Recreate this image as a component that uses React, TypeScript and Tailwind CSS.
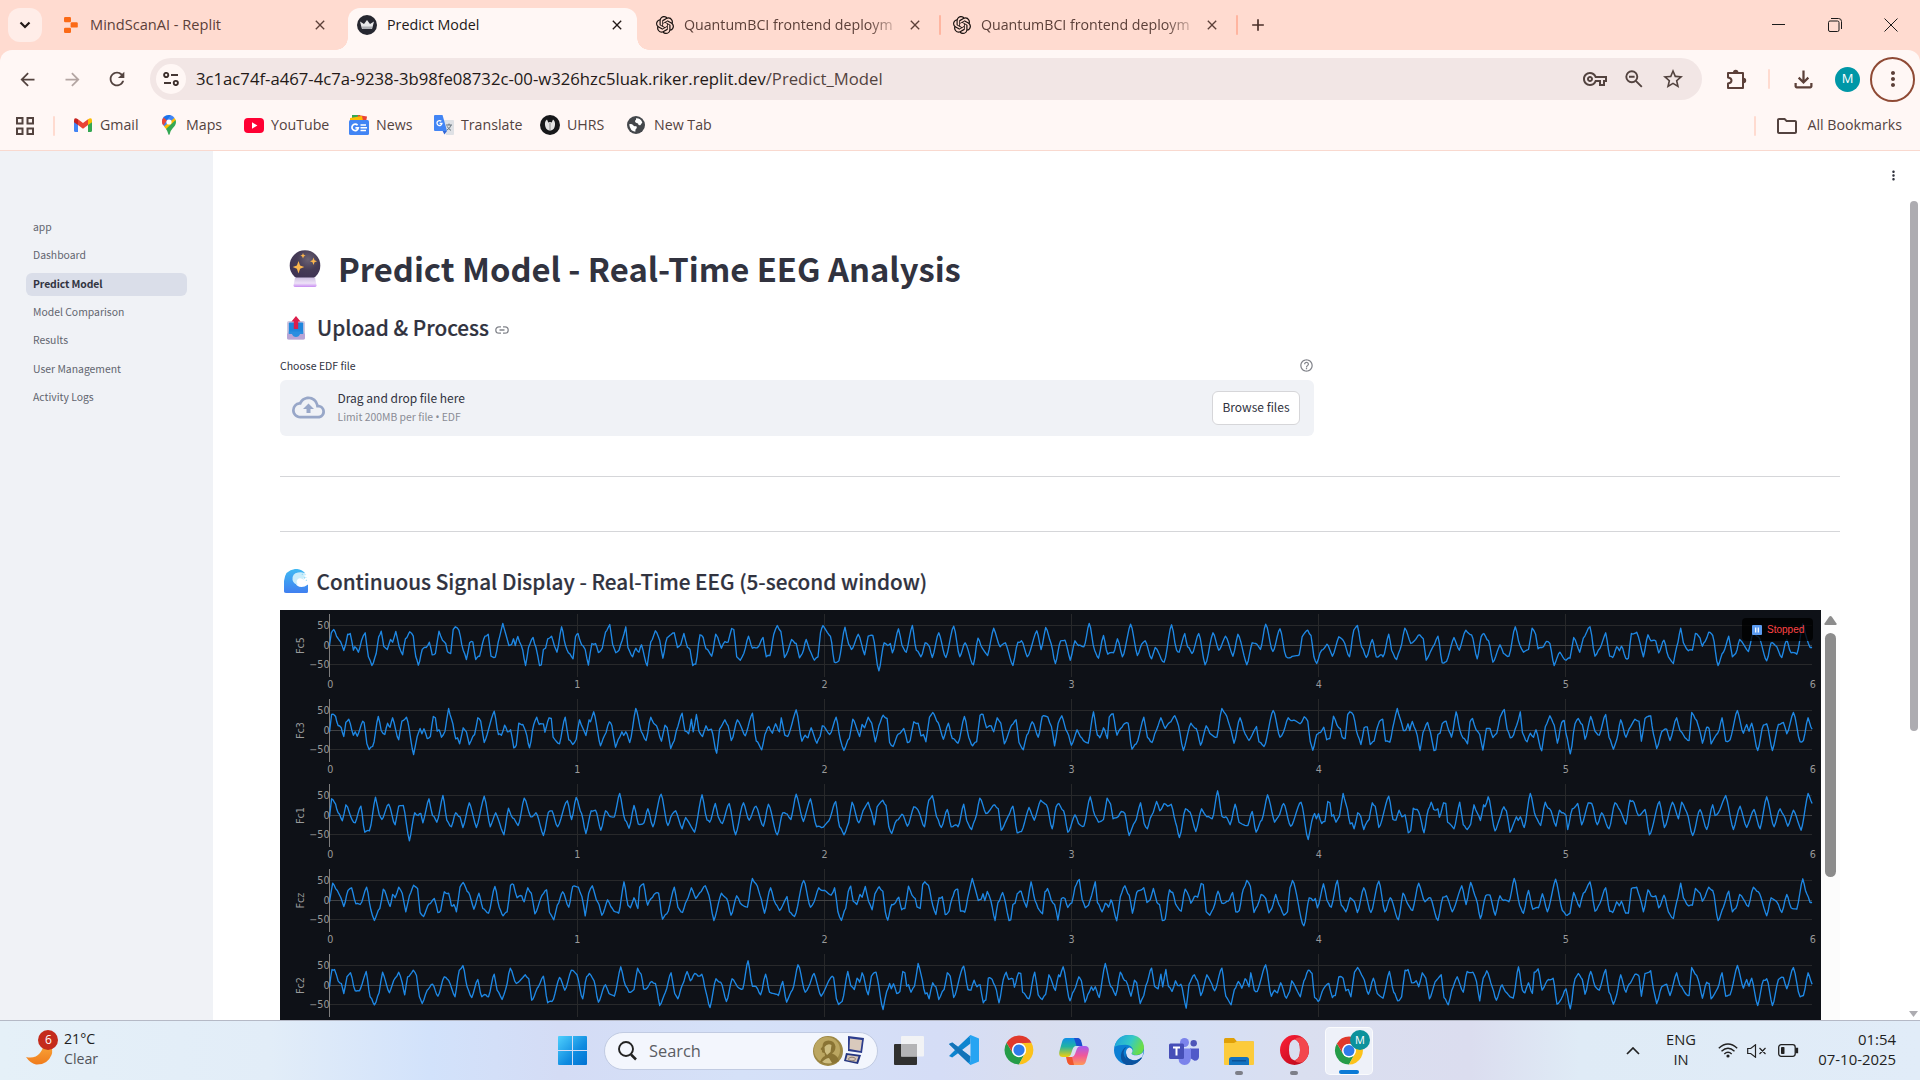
import type { ReactNode } from 'react';
import {
  MdAdd,
  MdArrowBack,
  MdArrowForward,
  MdClose,
  MdHelpOutline,
  MdMoreVert,
  MdOutlineCloudUpload,
  MdOutlineFileDownload,
  MdOutlineFolder,
  MdOutlineVpnKey,
  MdRefresh,
  MdStarBorder,
} from 'react-icons/md';
import { SiOpenai } from 'react-icons/si';

/* ---------- signal data: x / value pairs, 693 x-units per second, 3 value-units per pixel ---------- */

const HEAD: number[][] = [
  [166,0,171,-38,178,-48,190,-21,197,-11,206,15,212,-6,217,-34,224,-36,233,14,237,4,247,20,256,-16,266,-38,275,34,285,60,297,24,304,-26,311,-43,318,2,328,12,337,-18,343,-10,352,-42,361,2,371,28,379,-20,391,-41,401,-28,408,34,415,59,426,12,437,6,446,-10,454,28,463,24,473,-43,483,-16,492,-6,497,19,506,24,513,-48,519,-56,529,-46,541,14,550,42,559,-8,568,-11,576,42,587,32,595,-6,602,-28,611,-34,619,32,631,35,643,-26,652,-66,660,-36,669,0,677,-4,682,-20,687,0,694,-27,704,0,716,60,724,6,737,-24,745,6,755,60,760,58,766,12,772,8,778,-20,789,-28,797,2,804,20,817,-56,828,0,836,22,849,40,856,-26,863,-36,873,-2,883,12,892,59,902,-6,912,-6,920,21,931,8,940,-40,952,-63,960,-4,969,22,978,14,987,-16,997,-56,1003,6,1016,34,1025,8,1034,20,1041,-2,1057,61,1067,-11,1080,-44,1092,-16,1101,38,1113,-24,1120,-30,1133,-38,1142,6,1151,-2,1160,-36,1170,6,1177,12,1185,60,1193,56,1205,-32,1214,-24,1222,10,1238,32,1249,-34,1255,-24,1265,8,1275,-12,1284,-10,1294,-51,1300,-48,1308,34,1318,44,1328,24,1341,-28,1352,8,1361,7,1370,2,1382,-24,1391,34,1401,30,1412,-34,1422,-60,1432,-42,1442,36,1452,16,1462,-18,1475,-6,1484,37,1492,24,1503,-18,1512,12,1526,44,1536,34,1543,-38,1550,-60],
  [166,4,172,-48,183,-42,190,-15,199,-8,206,18,212,-25,220,-34,233,14,238,4,244,17,259,-28,263,-24,271,40,277,57,287,48,303,-42,311,0,321,12,329,-22,336,-10,343,-38,360,28,369,-28,382,-40,402,72,412,18,420,-6,425,10,431,-5,440,24,449,18,457,-42,463,-38,468,2,473,-2,480,20,490,2,500,-66,508,-35,520,25,525,22,531,40,541,-8,550,4,558,42,568,18,573,12,582,-38,590,-28,600,36,628,-58,640,12,648,14,657,-16,665,4,674,-2,683,52,690,44,697,-22,708,-18,716,2,727,52,739,-18,747,-40,754,-18,766,-20,770,5,782,-38,788,-36,793,20,811,40,827,-40,837,28,848,42,858,26,867,-32,877,-6,885,15,894,-32,898,-26,907,-56,926,46,937,16,951,-26,958,-14,968,50,980,20,986,4,991,15,997,4,1008,36,1025,-66,1040,2,1054,30,1067,-40,1075,-22,1083,-14,1097,32,1107,-16,1113,-8,1123,54,1133,30,1139,0,1155,-52,1163,2,1173,10,1181,-34,1186,4,1195,-48,1202,2,1212,18,1222,-14,1228,0,1237,-4,1252,68,1260,-4,1275,-32,1284,-14,1293,30,1310,-32,1320,-12,1332,16,1352,-52,1363,32,1378,58,1387,12,1398,-12,1408,8,1417,-20,1428,4,1433,-38,1443,14,1451,18,1475,-62,1491,32,1500,14,1508,22,1517,-8,1533,38,1542,18,1548,-14],
  [166,4,172,-50,183,-34,190,-8,202,16,212,-32,230,14,238,22,254,-28,265,50,278,46,295,-55,305,-4,313,12,332,-34,350,28,360,-28,373,-30,390,76,405,-8,415,0,422,-6,428,22,445,-50,455,0,467,20,484,-60,495,14,508,34,520,-8,532,4,540,36,558,-38,578,36,600,-58,617,34,632,-8,655,58,668,-22,680,8,695,30,712,-52,730,4,745,-8,766,60,780,-10,790,-14,806,34,833,-44,845,12,858,-54,873,-6,885,54,900,-14,912,-16,927,44,940,-14,950,0,965,4,980,-66,995,14,1006,38,1020,-30,1032,26,1048,22,1059,-20,1073,34,1096,-64,1115,30,1127,-4,1137,-14,1155,40,1165,6,1190,50,1211,-62,1225,14,1232,20,1248,-36,1256,4,1268,24,1287,-36,1305,58,1327,-38,1343,14,1362,-28,1383,32,1397,-34,1422,58,1437,-8,1450,-4,1460,12,1475,-64,1495,18,1515,-50,1532,34,1545,36],
  [166,4,175,-52,188,-30,198,-8,206,18,218,-30,228,-38,240,10,252,12,270,-40,282,28,292,60,307,24,317,-34,336,18,343,-18,350,-8,360,-40,370,-22,380,34,390,-14,402,-46,413,-36,420,36,430,48,445,10,460,-6,470,36,478,30,488,-26,500,-22,508,16,515,12,522,34,532,-40,541,-54,556,-24,571,26,585,-22,596,24,612,38,630,-42,642,20,653,46,664,34,674,-46,682,-48,692,-8,705,-14,712,4,722,-38,732,-22,742,40,762,-16,775,-32,783,36,795,58,805,14,820,-26,837,20,848,-42,864,-40,874,-12,883,46,893,-22,903,-44,918,4,930,44,946,-2,955,18,968,34,977,38,992,-56,1003,14,1010,22,1020,-8,1031,24,1036,-40,1047,-50,1058,14,1068,-6,1076,-18,1089,-22,1100,56,1112,40,1133,-40,1143,20,1156,36,1168,0,1181,-38,1193,-6,1205,-24,1220,-44,1230,-16,1244,60,1265,-22,1280,-6,1292,44,1308,-14,1318,8,1338,20,1352,-66,1362,-50,1377,-4,1386,38,1403,-38,1417,10,1428,30,1449,-12,1456,34,1470,48,1496,-60,1515,20,1525,4,1538,-38,1550,-30],
  [166,4,173,-48,180,-48,190,-14,199,-6,206,24,215,-26,225,-38,238,16,250,16,269,-42,280,34,292,58,305,22,315,-40,334,22,350,-22,360,-40,370,-8,377,28,385,-26,401,-46,410,-30,418,34,426,54,440,14,455,-4,470,32,488,-26,500,-16,518,34,530,-46,540,-60,552,4,565,36,582,-18,593,34,605,28,612,34,628,-34,636,14,650,42,660,12,673,-52,690,-6,700,-14,715,-32,725,-20,733,44,752,4,766,-28,778,52,790,48,811,-24,826,14,844,-46,860,-32,876,40,887,-26,895,-36,908,-14,920,50,940,-2,950,24,965,32,983,-56,996,0,1006,20,1020,12,1030,-52,1040,-34,1047,10,1058,6,1070,-12,1080,-6,1092,60,1108,20,1124,-38,1134,24,1143,40,1155,0,1169,-42,1178,-14,1190,-36,1200,-28,1210,-34,1222,20,1233,66,1250,-20,1263,-10,1279,48,1295,-20,1310,4,1325,10,1340,-74,1352,2,1363,4,1375,28,1389,-34,1400,20,1425,30,1437,-12,1448,50,1464,14,1480,-62,1500,20,1510,4,1525,-36,1545,32],
];

const TAIL: number[][] = [
  [3,44,15,38,26,-24,44,20,55,-22,75,-56,90,32,105,8,122,-38,134,32,143,36,155,4,163,16,169,2,182,38,190,38,199,-36,215,-40,225,-8,235,34,249,-32,258,-14,272,-14,281,22,297,-16,310,34,325,54,335,4,347,-52,355,-8,370,16,382,14,391,-36,405,-22,412,2,420,-12,431,-40,443,-30,459,60,475,20,491,-28,502,34,512,24,524,-18,535,-4,550,18,565,-40,580,-26,605,46,618,-8,635,4,650,36,665,-18,678,22,695,26,713,-65,725,-20,735,6,741,6],
  [3,10,16,70,30,-20,40,-36,52,-18,60,26,77,-42,90,2,103,14,122,-48,132,20,145,56,155,28,167,-32,183,20,192,-4,210,-34,222,-28,229,32,240,-36,257,-44,265,10,275,54,290,4,305,-4,315,30,335,-38,345,0,360,22,372,30,380,-54,395,-30,404,0,412,38,425,-10,432,-6,438,40,458,8,471,-38,482,32,495,28,517,-60,535,8,545,-18,552,2,560,-22,578,60,595,-16,605,-20,622,60,640,-18,655,-24,665,10,685,-54,705,34,715,30,729,-38,741,-4],
  [3,0,8,42,22,-20,38,-36,50,28,70,-38,80,-36,97,28,110,-8,132,40,150,-38,165,-16,183,26,195,-46,203,-44,220,0,240,-18,253,58,283,-42,298,36,322,-40,340,10,350,-40,365,-10,383,60,405,-18,425,42,443,-32,450,0,460,-8,482,-60,505,42,525,-28,545,36,567,-18,585,40,605,-56,627,34,645,-20,655,-2,668,32,685,-16,708,44,729,-66,741,-36],
];

const CHANNELS = ['Fc5', 'Fc3', 'Fc1', 'Fcz', 'Fc2'];
const SECOND = 247.1;
const X0 = 49.5;

function section(src: number[], origin: number, rate: number, from: number, to: number, at: number) {
  const out: [number, number][] = [];
  for (let i = 0; i < src.length; i += 2) {
    const t = (src[i] - origin) / rate;
    if (t >= from && t < to) out.push([t - from + at, src[i + 1] / 3]);
  }
  return out;
}

function tracePoints(row: number): string {
  const n = HEAD.length;
  const pts = [
    ...section(HEAD[row], 166, 693, 0, 2, 0),
    ...section(HEAD[(row + 2) % n], 166, 693, 0.12, 2, 2.02),
    ...section(HEAD[(row + 4) % n], 166, 693, 0.3, 1.38, 3.92),
    ...section(TAIL[row % 3], 0, 741, 0, 1.01, 5),
  ];
  const out: string[] = [];
  for (let i = 0; i < pts.length; i++) {
    const [t, v] = pts[i];
    out.push(`${(X0 + t * SECOND).toFixed(1)},${v.toFixed(1)}`);
    const next = pts[i + 1];
    if (!next) continue;
    const steps = Math.max(1, Math.round((next[0] - t) / 0.006));
    for (let k = 1; k < steps; k++) {
      const u = k / steps;
      const eased = 0.35 * u + 0.65 * u * u * (3 - 2 * u);
      const wobble = Math.sin((i * 7 + k) * 12.9898 + row) * 0.9;
      out.push(`${(X0 + (t + (next[0] - t) * u) * SECOND).toFixed(1)},${(v + (next[1] - v) * eased + wobble).toFixed(1)}`);
    }
  }
  return out.join(' ');
}

function SignalChart() {
  return (
    <svg width="1541" height="410" viewBox="0 0 1541 410" className="block bg-[#0e1117]" fontFamily="'DejaVu Sans', Verdana, sans-serif" fontSize="9.6">
      {CHANNELS.map((name, row) => {
        const zero = 35.5 + row * 85;
        return (
          <g key={name} transform={`translate(0 ${zero})`}>
            {[1, 2, 3, 4, 5].map((s) => (
              <line key={s} x1={Math.round(X0 + s * SECOND) + 0.5} x2={Math.round(X0 + s * SECOND) + 0.5} y1="-31.5" y2="31.5" stroke="#27282a" />
            ))}
            <line x1="50" x2="1532" y1="-20" y2="-20" stroke="#28292b" />
            <line x1="50" x2="1532" y1="0" y2="0" stroke="#414244" />
            <line x1="50" x2="1532" y1="19" y2="19" stroke="#28292b" />
            <line x1="49.5" x2="49.5" y1="-31.5" y2="31.5" stroke="#7c7c7c" />
            <polyline points={tracePoints(row)} fill="none" stroke="#1e88e5" strokeWidth="1.35" strokeLinejoin="round" />
            <g fill="#999a9b">
              <text x="49.5" y="-16.3" textAnchor="end">50</text>
              <text x="49.5" y="3.7" textAnchor="end">0</text>
              <text x="49.5" y="22.7" textAnchor="end">−50</text>
              <text transform="translate(23.5 0) rotate(-90)" textAnchor="middle">{name}</text>
              {row < 4 && [0, 1, 2, 3, 4, 5, 6].map((s) => (
                <text key={s} x={X0 + 0.8 + s * SECOND} y="42.5" textAnchor="middle">{s}</text>
              ))}
            </g>
          </g>
        );
      })}
    </svg>
  );
}

/* ---------- logos ---------- */

const ReplitLogo = () => (
  <svg width="14" height="16" viewBox="0 0 14 16" fill="#fb6a16">
    <rect x="0" y="0" width="7" height="5.2" rx="1.2" />
    <rect x="6.6" y="5.2" width="7.2" height="5.4" rx="1.2" />
    <rect x="0" y="10.7" width="7" height="5.2" rx="1.2" />
  </svg>
);

const CrownLogo = () => (
  <svg width="20" height="20" viewBox="0 0 20 20">
    <circle cx="10" cy="10" r="10" fill="#262730" />
    <path d="M3 6.5l4 2.5L10 5l3 4 4-2.5-2 7.5H5z" fill="#e8e8ea" />
    <path d="M4.8 11.5h10.4L14.7 14H5.3z" fill="#aeb0b5" />
  </svg>
);

const ChromeLogo = () => (
  <svg width="30" height="30" viewBox="0 0 48 48">
    <path d="M24 47A23 23 0 0 1 4.08 12.5L14.5 29.5A11 11 0 0 0 33.5 29.5z" fill="#259c48" />
    <path d="M43.9 12.5A23 23 0 0 1 24 47L33.5 29.5A11 11 0 0 0 24 13z" fill="#fcc21b" />
    <path d="M4.08 12.5A23 23 0 0 1 43.92 12.5L24 13A11 11 0 0 0 14.5 29.5z" fill="#e0392c" />
    <circle cx="24" cy="24" r="11.4" fill="#fff" />
    <circle cx="24" cy="24" r="9" fill="#2f7bea" />
  </svg>
);

const GmailLogo = () => (
  <svg width="18" height="14" viewBox="0 0 18 14">
    <path d="M0 2.5V12.5Q0 14 1.4 14H4V5z" fill="#4285f4" />
    <path d="M18 2.5V12.5Q18 14 16.6 14H14V5z" fill="#34a853" />
    <path d="M14 5V1.2Q18-1 18 2.5V4.2L14 7z" fill="#fbbc04" />
    <path d="M4 5V1.2Q0-1 0 2.5V4.2L4 7z" fill="#c5221f" />
    <path d="M4 1.2L9 5l5-3.8V7L9 10.7 4 7z" fill="#ea4335" />
  </svg>
);

const MapsLogo = () => (
  <svg width="14" height="20" viewBox="0 0 14 20">
    <path d="M7 0Q10.5 0 12.5 3L4 13Q0 9.5 0 7 0 0 7 0z" fill="#4285f4" />
    <path d="M1.6 2.6Q3.8 0 7 0L8.8.3 4 6z" fill="#1a73e8" />
    <path d="M0 7Q0 4.5 1.6 2.6L5 5.4 1.3 10.4Q0 8.8 0 7z" fill="#ea4335" />
    <path d="M12.5 3L2 11.5 4.3 14.2 13.9 6Q13.6 4.2 12.5 3z" fill="#fbbc04" />
    <path d="M14 7Q14 10 10.5 13.5 8.5 15.5 7.7 19 7 21 6.3 19 5.6 16 4 14L13.6 5z" fill="#34a853" />
    <circle cx="7" cy="7" r="2.6" fill="#fff" />
  </svg>
);

const YouTubeLogo = () => (
  <svg width="20" height="15" viewBox="0 0 20 15">
    <rect width="20" height="15" rx="4" fill="#ff0033" />
    <path d="M8 4.2l5.4 3.3L8 10.8z" fill="#fff" />
  </svg>
);

const NewsLogo = () => (
  <svg width="20" height="20" viewBox="0 0 20 20">
    <path d="M3 0h8v6H3z" fill="#34a853" />
    <path d="M9 0l9 1.5L17 7H8z" fill="#ea4335" />
    <path d="M1 3l12-2 1 5H1z" fill="#fbbc04" />
    <rect y="5" width="20" height="15" rx="1.5" fill="#4285f4" />
    <path d="M8.6 10.3A3.2 3.2 0 1 0 9.3 12.9H6.4" fill="none" stroke="#fff" strokeWidth="1.7" />
    <path d="M11.5 10h5.5M11.5 12.7h6.5M11.5 15.4h5.5" stroke="#fff" strokeWidth="1.5" />
  </svg>
);

const TranslateLogo = () => (
  <svg width="20" height="20" viewBox="0 0 20 20">
    <path d="M8 5h11q1 0 1 1v13q0 1-1 1h-7z" fill="#dfe1e5" />
    <path d="M1 0h7.5L13 16H1q-1 0-1-1V1q0-1 1-1z" fill="#4285f4" />
    <path d="M8.6 16H13l-2.6 3.6z" fill="#3367d6" />
    <path d="M7.3 6.3A2.5 2.5 0 1 0 8 8.3H5.6" fill="none" stroke="#fff" strokeWidth="1.3" />
    <path d="M12 10h6M15 8.6V10M17 10q-.8 3.4-4 5M13.2 11.4q1.2 2.6 3.8 4" fill="none" stroke="#6b7780" strokeWidth="1" />
  </svg>
);

const UhrsLogo = () => (
  <svg width="20" height="20" viewBox="0 0 20 20">
    <circle cx="10" cy="10" r="10" fill="#17181a" />
    <path d="M7 4.500Q4.500 6 5 10q.6 4.500 4 5.500h2q3.600-1 4-5.500.4-4-2-5.500l-1.300 3q-1.700-1-3.400 0z" fill="#e4e4e4" />
    <path d="M10 8v7" stroke="#777" strokeWidth=".8" />
  </svg>
);

const GlobeLogo = () => (
  <svg width="18" height="18" viewBox="0 0 18 18">
    <circle cx="9" cy="9" r="9" fill="#44474b" />
    <path d="M2.2 8.2Q5 7.6 6.2 9.3q1.2 1.4 2.8.6 1.4.6.6 2.3-1.5.8-1.3 3.6Q3 15 2.2 8.2z" fill="#fff" />
    <path d="M9 2.3q4.5-.3 6.3 4.2l-2 2.7q-2 .3-2.3-1.8-3.2-.4-3-2.6 1.5-.6 1-2.5z" fill="#fff" />
  </svg>
);

const WindowsLogo = () => (
  <svg width="29" height="29" viewBox="0 0 29 29">
    <defs>
      <linearGradient id="win" x1="0" y1="0" x2="1" y2="1">
        <stop offset="0" stopColor="#4fd0fd" />
        <stop offset=".6" stopColor="#0f8be0" />
        <stop offset="1" stopColor="#0072d2" />
      </linearGradient>
    </defs>
    <path d="M1 0h13v14H0V1q0-1 1-1zM15 0h13q1 0 1 1v13H15zM0 15h14v14H1q-1 0-1-1zM15 15h14v13q0 1-1 1H15z" fill="url(#win)" />
  </svg>
);

const TaskViewLogo = () => (
  <svg width="30" height="29" viewBox="0 0 30 29">
    <rect x="0" y="8" width="23" height="21" rx="1" fill="#30302f" />
    <rect x="7" y="0" width="23" height="20.5" rx="1" fill="#f4f4f4" opacity=".92" />
    <path d="M7 8h16v12.5H7z" fill="#b4b4b6" />
  </svg>
);

const VsCodeLogo = () => (
  <svg width="30" height="30" viewBox="0 0 30 30">
    <path d="M21.5 0L9 11.8 3.2 7.4 0 9l6 6-6 6 3.2 1.6L9 18.2 21.5 30V21.6L13 15l8.5-6.6z" fill="#0d84cf" />
    <path d="M3.2 7.4L0 9l19 18.5 2.5-5.9z" fill="#1473b8" />
    <path d="M21.5 0L30 3.5v23L21.5 30 20 27.6l1.500-1V3.800L20 2.400z" fill="#27a4f2" />
  </svg>
);

const CopilotLogo = () => (
  <svg width="30" height="27" viewBox="0 0 30 27">
    <defs>
      <linearGradient id="cpA" x1="0" y1="0" x2="0" y2="1">
        <stop offset="0" stopColor="#0f8fe8" />
        <stop offset=".45" stopColor="#22b3a2" />
        <stop offset="1" stopColor="#f2cf0b" />
      </linearGradient>
      <linearGradient id="cpB" x1="0" y1="0" x2="0" y2="1">
        <stop offset="0" stopColor="#a45cf0" />
        <stop offset=".5" stopColor="#f0589a" />
        <stop offset="1" stopColor="#ff9a56" />
      </linearGradient>
    </defs>
    <path d="M7 0h11q3 0 4 4l1 4h-6q-2.500 0-3.500 3.500L12 16q-1 3-4 3H4Q-1 19 .5 13L3 4Q4 0 7 0z" fill="url(#cpA)" />
    <path d="M15 0h3.500q3 0 4 4l1 4h-6z" fill="#1a4fd0" />
    <path d="M23 27H12q-3 0-4-4l-.8-4H13q2 0 3-3l1.800-5Q19 8 22 8h4q5 0 3.500 6L27 23q-1 4-4 4z" fill="url(#cpB)" />
    <path d="M15 27h-3q-3 0-4-4l-.8-4H13z" fill="#f0562e" />
  </svg>
);

const EdgeLogo = () => (
  <svg width="30" height="30" viewBox="0 0 30 30">
    <defs>
      <linearGradient id="edA" x1="0" y1="0" x2="1" y2=".35">
        <stop offset="0" stopColor="#1b9de2" />
        <stop offset=".6" stopColor="#35c9c5" />
        <stop offset="1" stopColor="#6bdd4a" />
      </linearGradient>
    </defs>
    <circle cx="15" cy="15" r="15" fill="#0c7fd4" />
    <path d="M.5 12Q3 0 15 0q14 0 15 12.500 0 6.500-7 7.500-4.500.3-5.500-1.500 2-2 1.200-4.800Q17 10 11 9.800 4 9.800.5 12z" fill="url(#edA)" />
    <path d="M12.500 12Q8 16 10.500 21.500 14 28 22 26.500l5.500-3Q21 32 12 29.700 6 27 7 19.500 8.500 13 12.500 12z" fill="#0b539f" />
    <path d="M12 18q-.2-4.500 3.500-5.500 3.500 1 3 4-.8 1.500-1 2 .5 2 5.500 1.700Q28.500 19.500 29.500 16L28.400 22q-4 4-10 3-6-1.500-6.400-7z" fill="#d9e1f5" />
    <path d="M12 18q.4 6 6.500 7.300 5 .8 9-3.300l.2 1.500Q22 29 15 26.500 10.500 24 12 18z" fill="#0b539f" />
  </svg>
);

const TeamsLogo = () => (
  <svg width="30" height="27" viewBox="0 0 30 27">
    <circle cx="24.700" cy="5.200" r="3.200" fill="#4e56b9" />
    <path d="M21 10.500h9v8q0 4-4.500 4.300L21 20z" fill="#5059c9" />
    <circle cx="15.500" cy="4.500" r="4.500" fill="#7b83eb" />
    <path d="M9.500 10.500H22V20q-.5 6.500-6.500 7-5.500-.3-6-6z" fill="#7b83eb" />
    <rect y="5.500" width="15" height="15.500" rx="1.500" fill="#464eb8" />
    <path d="M4 9.500h7M7.500 9.500v8" stroke="#fff" strokeWidth="2" />
  </svg>
);

const ExplorerLogo = () => (
  <svg width="30" height="27" viewBox="0 0 30 27">
    <path d="M0 1.500Q0 0 1.500 0H10l3 3.500H29q1 0 1 1V10H0z" fill="#e0a008" />
    <path d="M0 5h10l3-1.700h16q1 0 1 1V26q0 1-1 1H1q-1 0-1-1z" fill="#fccb3b" />
    <path d="M5 27v-5.500q0-2.500 2.500-2.500h15q2.500 0 2.500 2.500V27z" fill="#1272c0" />
    <path d="M8 22.800h14" stroke="#0a4c8c" strokeWidth="1.200" />
  </svg>
);

const OperaLogo = () => (
  <svg width="29" height="30" viewBox="0 0 29 30">
    <defs>
      <linearGradient id="op" x1="0" y1="0" x2="1" y2="1">
        <stop offset="0" stopColor="#ff2038" />
        <stop offset="1" stopColor="#b30515" />
      </linearGradient>
    </defs>
    <path fillRule="evenodd" d="M14.500 0a14.500 15 0 1 0 0 30a14.500 15 0 1 0 0-30zM14.500 4.500q5.500 1 5.500 10.500t-5.500 10.500Q9 24.500 9 15t5.500-10.500z" fill="url(#op)" />
    <path d="M14.500 4.500Q18 1 23 3q6 4.500 6 12t-6 12q-5 2-8.500-1.500 5.500-1 5.500-10.500t-5.500-10.500z" fill="#f3464c" />
  </svg>
);

const CrystalBall = () => (
  <svg width="32" height="37" viewBox="0 0 32 37">
    <defs>
      <radialGradient id="ball" cx=".6" cy=".3" r=".8">
        <stop offset="0" stopColor="#6b6273" />
        <stop offset=".45" stopColor="#453b55" />
        <stop offset="1" stopColor="#3c2f52" />
      </radialGradient>
      <linearGradient id="base" x1="0" y1="0" x2="0" y2="1">
        <stop offset="0" stopColor="#cdbfe0" />
        <stop offset=".6" stopColor="#eee2f8" />
        <stop offset="1" stopColor="#c88cf2" />
      </linearGradient>
    </defs>
    <circle cx="16" cy="15.500" r="15.300" fill="url(#ball)" />
    <path d="M6 27.500h20l1.500 8q0 1.500-2 1.500h-19q-2 0-2-1.500z" fill="url(#base)" />
    <path d="M9.500 11l1.600 4.600 4.200 1.500-4.200 1.600L9.500 23.500l-1.600-4.800-4.200-1.600 4.200-1.500zM24.500 7.500l1 2.700 2.500 1-2.500 1-1 2.800-1-2.800-2.500-1 2.500-1zM14 3l.8 1.900 1.800.7-1.800.8L14 8.500l-.8-2.100-1.800-.8 1.800-.7z" fill="#fcb64e" />
  </svg>
);

const OutboxEmoji = () => (
  <svg width="19" height="24" viewBox="0 0 19 24">
    <rect x="0" y="5" width="18" height="18.500" rx="2" fill="#cfc6df" />
    <rect x="1.800" y="6.500" width="14.400" height="12" rx="1" fill="#1f86dd" />
    <path d="M0 17.500h5q1 3 4 3t4-3h5V22q0 1.500-1.500 1.500h-15Q0 23.500 0 22z" fill="#b9a5d6" />
    <path d="M1.800 15.500h14.400v2.500H13q-1 3-4 3t-4-3H1.800z" fill="#2a8ee0" />
    <path d="M9 0l4.500 5.500h-2.300V13H6.800V5.500H4.500z" fill="#dc1f4c" />
  </svg>
);

const WaveEmoji = () => (
  <svg width="24" height="24" viewBox="0 0 24 24">
    <defs>
      <linearGradient id="wave" x1="0" y1="0" x2="0" y2="1">
        <stop offset="0" stopColor="#3fb9f3" />
        <stop offset="1" stopColor="#407ff0" />
      </linearGradient>
    </defs>
    <path d="M0 22.500V12Q1 1 11 0q6-.5 10 4l-9 4q-3 5 1 8.500 5 3.500 11-1v7q0 1.500-1.500 1.500h-20Q0 24 0 22.500z" fill="url(#wave)" />
    <path d="M8.500 11Q8 4 14 3.500q6-1 8.500 2.500l-3 .8 4 2.200-4.500-.2L20 11q-4-3-6.500-.5-2 2.500.5 5-4.500-.5-5.500-4.500z" fill="#c9edfb" />
    <path d="M20 8.500l.8.800M22 11l.6.600M18 5l.6.600" stroke="#83d5f5" strokeWidth="1.200" />
  </svg>
);

const CrescentWeather = () => (
  <svg width="34" height="38" viewBox="0 0 34 38">
    <defs>
      <linearGradient id="moon" x1="0" y1="0" x2="0" y2="1">
        <stop offset="0" stopColor="#fbb040" />
        <stop offset="1" stopColor="#f07b1c" />
      </linearGradient>
    </defs>
    <path d="M16 10q13 5 9.500 15Q21.500 35 10 34.500 4 33 0 27q9 2 14-4t2-13z" fill="url(#moon)" />
    <circle cx="22" cy="10" r="10" fill="#c42b1c" />
  </svg>
);

/* ---------- browser chrome ---------- */

const TabSeparator = ({ className }: { className: string }) => <div className={`h-5 w-0.5 rounded-full ${className}`} />;

const PuzzleIcon = ({ className }: { className: string }) => (
  <svg width="21" height="21" viewBox="0 0 21 21" className={className}>
    <path d="M2 4h15v15H2v-4.500q3.500-.5 3.500-3T2 8.500z" fill="none" stroke="currentColor" strokeWidth="2" strokeLinejoin="round" />
    <path d="M7 3.500a2.700 2.700 0 0 1 5.400 0zM17.500 8.800a2.700 2.700 0 0 1 0 5.400z" fill="currentColor" />
  </svg>
);

const ZoomOutIcon = ({ className }: { className: string }) => (
  <svg width="18" height="18" viewBox="0 0 18 18" fill="none" stroke="currentColor" strokeWidth="1.900" className={className}>
    <circle cx="6.800" cy="6.800" r="5.500" />
    <path d="M10.800 10.800l6 6M4 6.800h5.600" />
  </svg>
);

function BrowserTab({ icon, title, className, fade }: { icon: ReactNode; title: string; className: string; fade?: boolean }) {
  return (
    <div className={`flex items-center justify-between text-[#5c4039] ${className}`}>
      <div className="flex items-center">
        {icon}
        <span className={`whitespace-nowrap ${fade ? '[mask-image:linear-gradient(to_right,black_88%,rgba(0,0,0,0.3)_100%)]' : ''}`}>{title}</span>
      </div>
      <MdClose size={16} className="shrink-0" />
    </div>
  );
}

function TabStrip() {
  return (
    <div className="flex h-[50px] shrink-0 items-start bg-[#ffdbd0] text-[14.300px]">
      <div className="ml-2 mt-2 flex h-[34px] w-[34px] items-center justify-center rounded-xl bg-[#ffede8]">
        <svg width="12" height="8" viewBox="0 0 12 8" fill="none" stroke="#231917" strokeWidth="2.200"><path d="M1.500 1.500L6 6l4.500-4.500" /></svg>
      </div>
      <div className="ml-[22px] flex h-[50px]">
        <BrowserTab icon={<ReplitLogo />} title="MindScanAI - Replit" className="w-[264px] gap-3 text-[14.600px] [&>div]:gap-3" />
      </div>
      <div className="ml-2 flex h-[50px] items-end">
        <div className="h-3 w-3 bg-[radial-gradient(circle_at_0_0,#ffdbd0_11.500px,#fff7f5_12px)]" />
      </div>
      <div className="mt-2 flex h-[42px] w-[289px] items-center rounded-t-[12px] bg-[#fff7f5] pb-2 pl-[9px] pr-3 text-[#231917]">
        <span className="flex w-[30px]"><CrownLogo /></span>
        <span className="flex-1 whitespace-nowrap">Predict Model</span>
        <MdClose size={16} />
      </div>
      <div className="flex h-[50px] items-end">
        <div className="h-3 w-3 bg-[radial-gradient(circle_at_100%_0,#ffdbd0_11.500px,#fff7f5_12px)]" />
      </div>
      <div className="ml-[7px] flex h-[50px] items-center">
        <BrowserTab icon={<SiOpenai size={18} color="#1a1210" />} title="QuantumBCI frontend deploym" className="w-[267px] text-[14.200px] [&>div]:gap-[10px]" fade />
        <TabSeparator className="ml-4 bg-[#ffb5a0]" />
        <BrowserTab icon={<SiOpenai size={18} color="#1a1210" />} title="QuantumBCI frontend deploym" className="ml-3 w-[267px] text-[14.200px] [&>div]:gap-[10px]" fade />
        <TabSeparator className="ml-4 bg-[#ffb5a0]" />
        <MdAdd size={20} className="ml-[10px] text-[#4a2f28]" />
      </div>
      <div className="ml-auto mr-[22px] flex h-[50px] items-center gap-[42px]">
        <svg width="14" height="14" viewBox="0 0 14 14" stroke="#1b1b1b"><path d="M0 6.500h13" /></svg>
        <svg width="14" height="14" viewBox="0 0 14 14" fill="none" stroke="#1b1b1b"><rect x=".5" y="3" width="10.500" height="10.500" rx="1.500" /><path d="M3 .5h7.500q3 0 3 3V11" /></svg>
        <svg width="14" height="14" viewBox="0 0 14 14" stroke="#1b1b1b"><path d="M.5.5l13 13M13.500.5l-13 13" /></svg>
      </div>
    </div>
  );
}

function Toolbar() {
  return (
    <div className="bg-[#ffdbd0]">
      <div className="flex h-[58px] items-center rounded-t-[12px] bg-[#fff7f5] pl-[17px] pr-[5px] text-[#53433f]">
        <MdArrowBack size={21} />
        <MdArrowForward size={21} className="ml-6 text-[#b3a5a2]" />
        <MdRefresh size={22} className="ml-[23px]" />
        <div className="ml-[22px] flex h-[42px] w-[1552px] items-center rounded-full bg-[#f2e6e5] pl-1.5 pr-[17px]">
          <div className="flex h-[30px] w-[30px] items-center justify-center rounded-full bg-[#fff7f5]">
            <svg width="16" height="14" viewBox="0 0 16 14" fill="none" stroke="#3b2d2a" strokeWidth="1.900">
              <circle cx="3.200" cy="3" r="2.100" /><path d="M8 3h7" /><circle cx="12.800" cy="11" r="2.100" /><path d="M1 11h7" />
            </svg>
          </div>
          <div className="ml-[10px] whitespace-nowrap text-[16.700px] text-[#231917]">
            3c1ac74f-a467-4c7a-9238-3b98fe08732c-00-w326hzc5luak.riker.replit.dev<span className="text-[#53433f]">/Predict_Model</span>
          </div>
          <div className="ml-auto flex items-center">
            <MdOutlineVpnKey size={24} />
            <ZoomOutIcon className="ml-[18px]" />
            <MdStarBorder size={24} className="ml-[18px]" />
          </div>
        </div>
        <PuzzleIcon className="ml-[24px] text-[#5c4039]" />
        <TabSeparator className="ml-[21px] bg-[#ffdbd0]" />
        <MdOutlineFileDownload size={27} className="ml-[20px] text-[#5c4039]" />
        <div className="ml-auto flex h-[25px] w-[25px] items-center justify-center rounded-full bg-[#0097a7] text-[13px] text-white">M</div>
        <div className="ml-[10px] flex h-[45px] w-[45px] items-center justify-center rounded-full border-2 border-[#8f4a35]">
          <MdMoreVert size={24} className="text-[#5c4039]" />
        </div>
      </div>
    </div>
  );
}

function Bookmark({ icon, label, className }: { icon: ReactNode; label: string; className: string }) {
  return (
    <div className={`flex items-center whitespace-nowrap ${className}`}>
      {icon}
      <span className="-mt-px">{label}</span>
    </div>
  );
}

function BookmarksBar() {
  return (
    <div className="flex h-[43px] shrink-0 items-center border-b border-[#f9d9cf] bg-[#fff7f5] pb-[7px] pl-4 pr-[18px] text-[14.200px] text-[#53433f]">
      <svg width="18" height="18" viewBox="0 0 18 18" fill="none" stroke="#53433f" strokeWidth="2">
        <rect x="1" y="1" width="5.500" height="5.500" /><rect x="11.500" y="1" width="5.500" height="5.500" /><rect x="1" y="11.500" width="5.500" height="5.500" /><rect x="11.500" y="11.500" width="5.500" height="5.500" />
      </svg>
      <TabSeparator className="ml-[19px] bg-[#ffdbd0]" />
      <Bookmark icon={<GmailLogo />} label="Gmail" className="ml-[19px] w-[88px] gap-2" />
      <Bookmark icon={<MapsLogo />} label="Maps" className="w-[82px] gap-[10px]" />
      <Bookmark icon={<YouTubeLogo />} label="YouTube" className="w-[105px] gap-[7px]" />
      <Bookmark icon={<NewsLogo />} label="News" className="w-[85px] gap-[7px]" />
      <Bookmark icon={<TranslateLogo />} label="Translate" className="w-[106px] gap-[7px]" />
      <Bookmark icon={<UhrsLogo />} label="UHRS" className="w-[87px] gap-[7px]" />
      <Bookmark icon={<GlobeLogo />} label="New Tab" className="gap-[9px]" />
      <TabSeparator className="ml-auto bg-[#ffdbd0]" />
      <Bookmark icon={<MdOutlineFolder size={24} />} label="All Bookmarks" className="ml-[19px] gap-2" />
    </div>
  );
}

/* ---------- page ---------- */

const PAGES = ['app', 'Dashboard', 'Predict Model', 'Model Comparison', 'Results', 'User Management', 'Activity Logs'];

function Sidebar() {
  return (
    <nav className="flex w-[213px] shrink-0 flex-col gap-[5.400px] bg-[#f0f2f6] pl-[26px] pt-[65px] text-[10.400px] text-[#62656f]">
      {PAGES.map((page) => (
        <a
          key={page}
          className={`flex h-[23px] w-[161px] shrink-0 items-center rounded-md pl-[7px] ${page === 'Predict Model' ? 'bg-[#dadee9] font-bold tracking-[-0.1px] text-[#31333f]' : 'pb-[2px]'}`}
        >
          {page}
        </a>
      ))}
    </nav>
  );
}

function Uploader() {
  return (
    <section className="w-[1034px]">
      <div className="mt-[12px] flex h-5 items-center justify-between text-[10.500px]">
        <span>Choose EDF file</span>
        <MdHelpOutline size={15} className="text-[#83858c]" />
      </div>
      <div className="mt-[4px] flex h-14 items-center rounded-[6px] bg-[#f0f2f6] pl-3 pr-[14px]">
        <MdOutlineCloudUpload size={33} className="text-[#98a7c8]" />
        <div className="ml-[12.500px] flex flex-col pb-px">
          <span className="text-[12px] leading-[19px]">Drag and drop file here</span>
          <span className="text-[10.400px] leading-[19px] text-[#8a8c95]">
            Limit 200MB per file <span className="font-['Noto_Sans']">•</span> EDF
          </span>
        </div>
        <button className="ml-auto h-[34px] w-[88px] rounded-[6px] border border-[#d6d6d9] bg-white pb-px text-[12px]">Browse files</button>
      </div>
    </section>
  );
}

function SignalPanel() {
  return (
    <div className="mt-[13px] flex h-[410px] bg-[#fcfcfc]">
      <div className="relative">
        <SignalChart />
        <div className="absolute right-2 top-2 flex h-[23px] w-[71px] items-center rounded bg-black/80 pl-[10px] font-['Liberation_Sans',sans-serif] text-[10px] text-[#ff4444]">
          <svg width="10" height="10" viewBox="0 0 10 10"><rect width="10" height="10" rx="1" fill="#5a9bf0" /><path d="M3.700 2.500v5M6.300 2.500v5" stroke="#fff" strokeWidth="1.200" /></svg>
          <span className="ml-[5px]">Stopped</span>
        </div>
      </div>
      <div className="flex w-[19px] flex-col items-center pr-[1px] pt-[6px]">
        <svg width="13" height="9" viewBox="0 0 13 9"><path d="M6.500 0Q7.300 0 8 1l4.500 6.500q.5 1.500-.8 1.500H1.300Q0 9 .5 7.500L5 1q.7-1 1.500-1z" fill="#8b8b8b" /></svg>
        <div className="mt-[8px] h-[244px] w-[11px] rounded-full bg-[#8b8b8b]" />
      </div>
    </div>
  );
}

function Page() {
  return (
    <div className="flex h-[869px] shrink-0 overflow-hidden bg-white font-['Noto_Sans_CJK_SC',sans-serif] text-[#31333f]">
      <Sidebar />
      <main className="flex min-w-0 flex-1 pl-[67px]">
        <div className="flex w-[1560px] shrink-0 flex-col">
          <h1 className="mt-[93px] flex h-12 items-center text-[32.780px] font-bold">
            <span className="ml-[9px] mr-[17px] flex"><CrystalBall /></span>
            Predict Model - Real-Time EEG Analysis
          </h1>
          <h3 className="mt-[20px] flex h-[34px] items-center text-[20.730px] font-medium [-webkit-text-stroke:0.2px_#31333f]">
            <span className="ml-[7px] mr-[11px] flex"><OutboxEmoji /></span>
            Upload &amp; Process
            <svg width="14" height="8" viewBox="0 0 14 8" fill="none" stroke="#83858c" strokeWidth="1.300" className="ml-[6px] mt-[4px]">
              <path d="M6 .8H4a3.200 3.200 0 0 0 0 6.400h2M8 .8h2a3.200 3.200 0 0 1 0 6.400H8M4.500 4h5" />
            </svg>
          </h3>
          <Uploader />
          <hr className="mt-10 border-[#d5d6d9]" />
          <hr className="mt-[54px] border-[#d5d6d9]" />
          <h3 className="mt-[34px] flex h-[34px] items-center text-[20.730px] font-medium [-webkit-text-stroke:0.2px_#31333f]">
            <span className="ml-1 mr-[8.500px] flex"><WaveEmoji /></span>
            Continuous Signal Display - Real-Time EEG (5-second window)
          </h3>
          <SignalPanel />
        </div>
        <div className="ml-auto flex w-[80px] shrink-0 flex-col items-end">
          <MdMoreVert size={15} className="mr-[19px] mt-[17px]" />
          <div className="mr-[2px] mt-[18px] h-[530px] w-[8px] rounded-full bg-[#adacb1]" />
          <svg width="9" height="6" viewBox="0 0 9 6" className="mb-[3px] mr-[2px] mt-auto"><path d="M0 0h9L4.500 6z" fill="#adacb1" /></svg>
        </div>
      </main>
    </div>
  );
}

/* ---------- taskbar ---------- */

function AppSlot({ children, running }: { children: ReactNode; running?: boolean }) {
  return (
    <div className="flex h-12 w-12 flex-col items-center justify-end">
      <div className="flex flex-1 items-end justify-center pb-1.5">{children}</div>
      <div className={`h-1 w-2 rounded-full ${running ? 'bg-[#7d7f88]' : ''}`} />
    </div>
  );
}

function Taskbar() {
  return (
    <footer className="flex flex-1 items-center border-t border-[#b5b9c6] bg-[linear-gradient(to_right,#e5f0f8_0,#e2edf8_270px,#d2e2fb_430px,#d4dcf5_560px,#d5e1f8_740px,#d5ddf6_940px,#d9deef_1040px,#d4dff6_1180px,#dadff0_1300px,#dbddef_1470px,#dfebf6_1580px,#e1ecf8_1920px)] text-[14.900px] leading-5 text-[#1f1f22]">
      <div className="relative ml-[26px] flex w-[532px] items-center gap-1 pb-1">
        <CrescentWeather />
        <span className="absolute left-[19px] top-[3px] text-[12px] leading-4 text-white">6</span>
        <div className="flex flex-col text-[14.200px]">
          <span>21°C</span>
          <span className="text-[#52545a]">Clear</span>
        </div>
      </div>
      <WindowsLogo />
      <div className="ml-[17px] flex h-[38px] w-[274px] items-center rounded-full border border-[#c1cbe2] bg-[#f3f6fd] pl-[13px] pr-[12px] text-[16.400px] text-[#5b5d63]">
        <svg width="19" height="20" viewBox="0 0 19 20" fill="none" stroke="#222"><circle cx="8" cy="8" r="7" strokeWidth="1.900" /><path d="M13 13.500l5 5" strokeWidth="2.500" /></svg>
        <span className="ml-[12px]">Search</span>
        <svg width="52" height="32" viewBox="0 0 52 32" className="ml-auto">
          <circle cx="15" cy="16" r="15" fill="#9c8744" />
          <circle cx="14" cy="15" r="13" fill="#bba661" />
          <path d="M7 27q2-5 5-6l-.5-3q-3 0-2.500-2.500L7.500 14l2-2.500q0-6 6-6t7 6q0 5-3.500 7 6 2 7 7.500-8 6-19 1z" fill="#8a7434" />
          <path d="M11.500 12q3-4 7-2l-1 7-3.500 3-2-3zM9 27q4-4 7-4l3 5q-5 1.500-10-1z" fill="#cdbd80" />
          <path d="M35 1l16 2-2 15-14-2z" fill="#2c3c8c" />
          <path d="M37 3.500l12 1.500-1.500 11-11-2z" fill="#d9c9bc" />
          <path d="M33 18l15 2-3 9-14-3z" fill="#253680" />
          <path d="M34.500 20l11 1.500-2 5.500-10.500-2z" fill="#d5c5b6" />
          <ellipse cx="39" cy="24" rx="3.500" ry="1.800" fill="none" stroke="#8d7f77" />
        </svg>
      </div>
      <div className="ml-[7px] flex w-[494px] gap-[7px]">
        <AppSlot><TaskViewLogo /></AppSlot>
        <AppSlot><VsCodeLogo /></AppSlot>
        <AppSlot><ChromeLogo /></AppSlot>
        <AppSlot><CopilotLogo /></AppSlot>
        <AppSlot><EdgeLogo /></AppSlot>
        <AppSlot><TeamsLogo /></AppSlot>
        <AppSlot running><ExplorerLogo /></AppSlot>
        <AppSlot running><OperaLogo /></AppSlot>
        <div className="relative flex h-12 w-12 shrink-0 flex-col items-center rounded-[5px] border border-white/70 bg-[#eef1f9] pt-2">
          <ChromeLogo />
          <div className="mt-[5px] h-1 w-5 rounded-full bg-[#0a7ad6]" />
          <div className="absolute right-[2px] top-[2px] flex h-5 w-5 items-center justify-center rounded-full bg-[#0c929c] text-[11px] text-white">M</div>
        </div>
      </div>
      <div className="ml-auto mr-[24px] flex items-center">
        <svg width="14" height="8" viewBox="0 0 14 8" fill="none" stroke="#222" strokeWidth="1.700"><path d="M1 7l6-6 6 6" /></svg>
        <div className="ml-[24px] flex w-[34px] flex-col items-center pb-1 text-[14.700px]">
          <span>ENG</span>
          <span>IN</span>
        </div>
        <svg width="20" height="15" viewBox="0 0 20 15" fill="none" stroke="#222" strokeWidth="1.400" className="ml-[20px]">
          <path d="M.8 5.200q9.200-8.500 18.400 0M3.500 8.200q6.500-6 13 0M6.300 11q3.700-3.300 7.400 0" /><circle cx="10" cy="13" r="1.600" fill="#222" stroke="none" />
        </svg>
        <svg width="20" height="14" viewBox="0 0 20 14" fill="none" stroke="#222" strokeWidth="1.200" className="ml-[9px]">
          <path d="M.7 4.500h3L8.500.8v12.400L3.700 9.500h-3zM12.500 4l6 6M18.500 4l-6 6" />
        </svg>
        <svg width="21" height="13" viewBox="0 0 21 13" fill="none" stroke="#222" strokeWidth="1.300" className="ml-[11px]">
          <rect x=".7" y=".7" width="16.500" height="11.600" rx="2.500" /><rect x="3" y="3" width="3.500" height="7" rx=".8" fill="#222" stroke="none" /><path d="M18 4.500h1.500v4H18z" fill="#222" />
        </svg>
        <div className="ml-[20px] flex w-[77px] flex-col items-end whitespace-nowrap pb-1">
          <span>01:54</span>
          <span>07-10-2025</span>
        </div>
      </div>
    </footer>
  );
}

export default function App() {
  return (
    <div className="flex h-[1080px] w-[1920px] flex-col overflow-hidden font-['Open_Sans',sans-serif]">
      <TabStrip />
      <Toolbar />
      <BookmarksBar />
      <Page />
      <Taskbar />
    </div>
  );
}
